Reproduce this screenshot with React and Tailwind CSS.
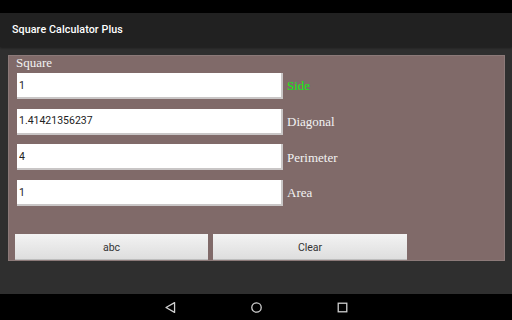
import { useState } from 'react';

const serif = { fontFamily: "'Liberation Serif', 'DejaVu Serif', serif" };

const rows = [
  { label: 'Side', value: '1', active: true },
  { label: 'Diagonal', value: '1.41421356237' },
  { label: 'Perimeter', value: '4' },
  { label: 'Area', value: '1' },
];

export default function App() {
  const [values, setValues] = useState(rows.map((r) => r.value));

  return (
    <div
      className="w-[512px] h-[320px] flex flex-col bg-[#2f2f2f] overflow-hidden"
      style={{ fontFamily: "Roboto, 'Liberation Sans', sans-serif" }}
    >
      {/* status bar */}
      <div className="h-[13px] bg-black" />

      {/* action bar */}
      <div className="h-[34px] bg-[#212121] flex items-center px-3 shadow-[0_1px_2px_rgba(0,0,0,0.4)]">
        <h1 className="text-[10.7px] font-medium text-white tracking-[0.1px]">Square Calculator Plus</h1>
      </div>

      {/* content */}
      <div className="flex-1 pt-[8px] pl-[8px] pr-[7px]">
        <div className="h-[206px] bg-[#806a69] border border-[#8c7a79] flex flex-col">
          <div className="h-[17px] pl-[7px] text-[13px] leading-[13px] text-[#f2f2f2]" style={serif}>
            Square
          </div>

          <div className="flex flex-col gap-[9.7px] pl-[8px]">
            {rows.map((r, i) => (
              <div key={r.label} className="flex items-center h-[26px]">
                <input
                  value={values[i]}
                  onChange={(e) => {
                    const next = [...values];
                    next[i] = e.target.value;
                    setValues(next);
                  }}
                  className="w-[266px] h-[26px] bg-white border-r-2 border-b-2 border-[#c9c6c6] pl-[2px] text-[10.5px] text-[#222] outline-none"
                />
                <span
                  className={`ml-[4px] text-[13px] ${r.active ? 'text-[#11ee11]' : 'text-[#f2f2f2]'}`}
                  style={serif}
                >
                  {r.label}
                </span>
              </div>
            ))}
          </div>

          <div className="mt-auto flex gap-[5px] pl-[6px]">
            <button className="w-[193px] h-[26px] pt-[2px] bg-gradient-to-b from-[#f3f3f3] to-[#dedede] border-b border-[#bdbdbd] text-[10.5px] text-[#333]">
              abc
            </button>
            <button className="w-[194px] h-[26px] pt-[2px] bg-gradient-to-b from-[#f3f3f3] to-[#dedede] border-b border-[#bdbdbd] text-[10.5px] text-[#333]">
              Clear
            </button>
          </div>
        </div>
      </div>

      {/* navigation bar */}
      <div className="h-[26px] bg-black flex items-center justify-center gap-[71px] text-[#d0d0d0]">
        <svg width="15" height="15" viewBox="0 0 14 14" fill="none" stroke="currentColor" strokeWidth="1.2">
          <path d="M2.8 7 L10.8 2.4 L10.8 11.6 Z" strokeLinejoin="round" />
        </svg>
        <svg width="15" height="15" viewBox="0 0 14 14" fill="none" stroke="currentColor" strokeWidth="1.2">
          <circle cx="7" cy="7" r="4.4" />
        </svg>
        <svg width="15" height="15" viewBox="0 0 14 14" fill="none" stroke="currentColor" strokeWidth="1.2">
          <rect x="3" y="3" width="8" height="8" />
        </svg>
      </div>
    </div>
  );
}
